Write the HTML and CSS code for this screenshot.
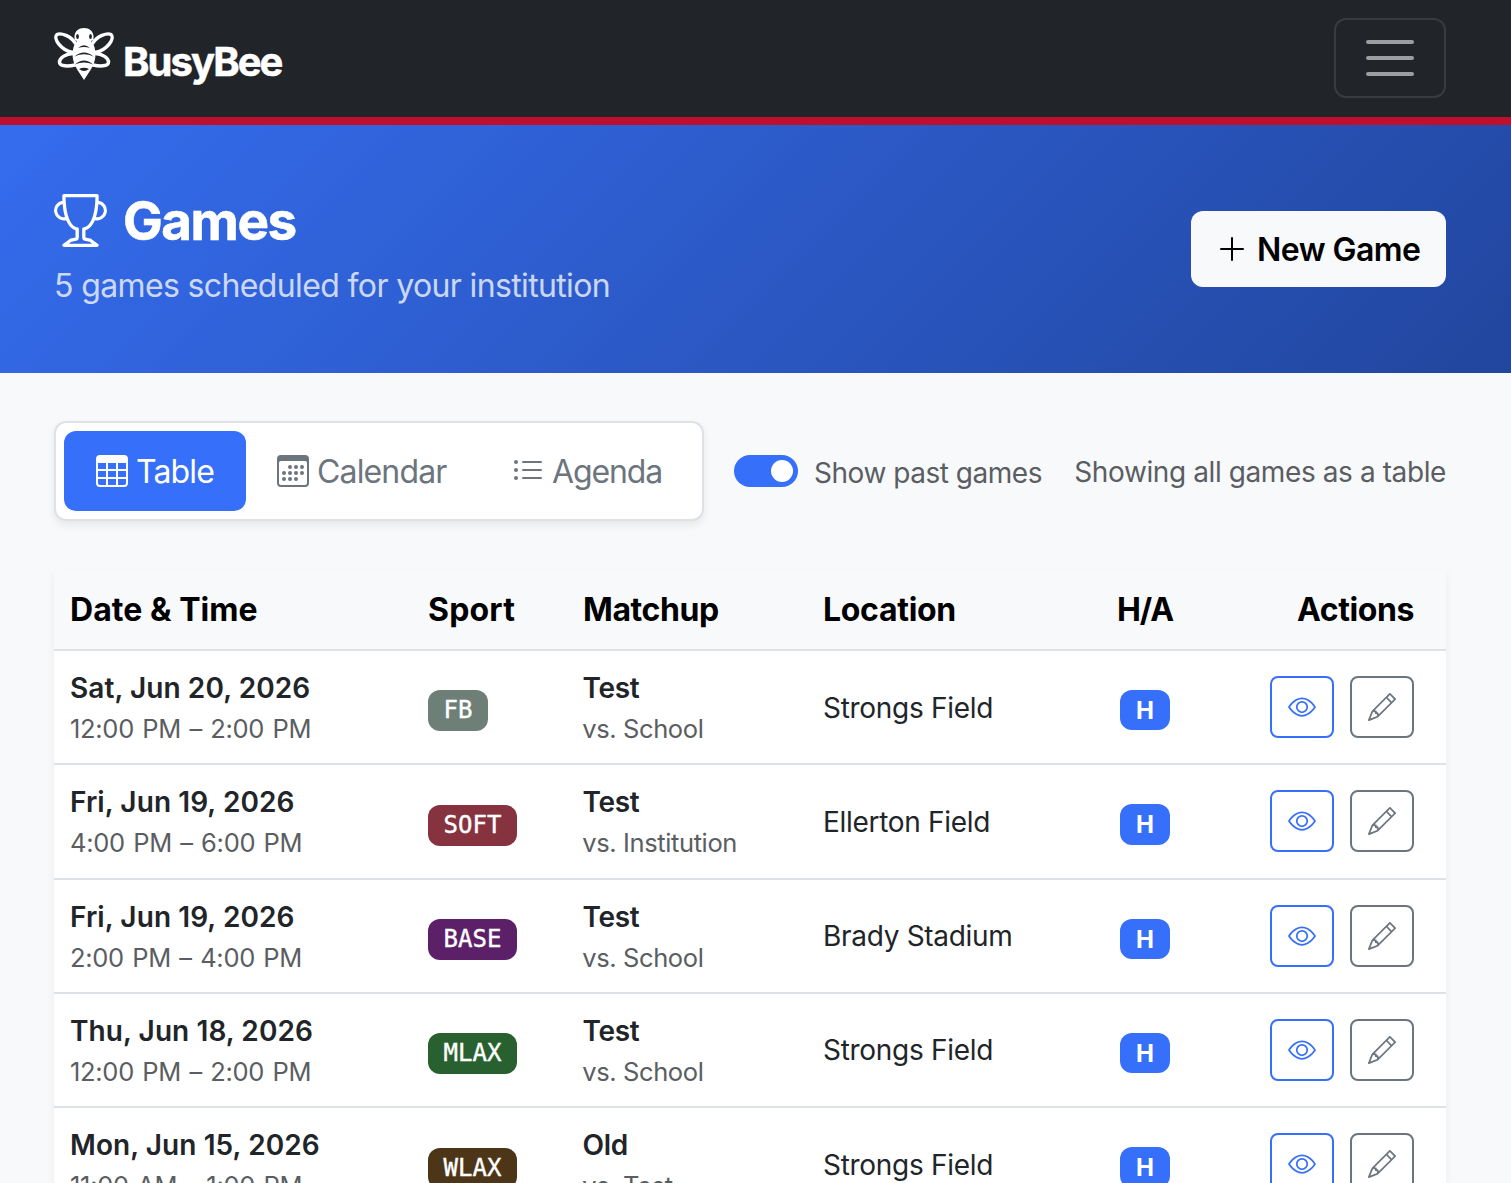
FILE: index.html
```html
<!DOCTYPE html>
<html lang="en">
<head>
<meta charset="utf-8">
<title>Games - BusyBee</title>
<link rel="stylesheet" href="styles.css">
</head>
<body>
<svg class="sprite" aria-hidden="true">
  <symbol id="bee" viewBox="0 0 60 52">
    <g class="bee-wings">
      <path d="M21 15C17 8 7 4.500 3 6.500-1 10 6 22 19 24.500M39 15C43 8 53 4.500 57 6.500 61 10 54 22 41 24.500"/>
      <path d="M19 25.500C12 25.500 5 30 5.500 34.500 6 38.500 14 38.500 21 37M41 25.500C48 25.500 55 30 54.500 34.500 54 38.500 46 38.500 39 37"/>
    </g>
    <path d="M30 0C24.500 0 21 3 20.500 8L20.500 12 23 13C20 16 18.500 21 18.500 26.500 18.500 32 20.500 37 23.500 42L30 52 36.500 42C39.500 37 41.500 32 41.500 26.500 41.500 21 40 16 37 13L39.500 12 39.500 8C39 3 35.500 0 30 0z"/>
    <g class="bee-cut">
      <ellipse cx="23.500" cy="8.500" rx="1.400" ry="2.600"/><ellipse cx="36.500" cy="8.500" rx="1.400" ry="2.600"/>
      <path d="M24 20Q30 14.500 36 20 30 18 24 20zM20.500 28.500Q30 20.500 39.500 28.500 30 24 20.500 28.500zM21 36.500Q30 28.500 39 36.500 30 32.500 21 36.500zM25 41Q30 38.500 35 41 30 45 25 41z"/>
    </g>
  </symbol>
  <symbol id="trophy" viewBox="0 0 16 16"><path d="M2.5.5A.5.5 0 0 1 3 0h10a.5.5 0 0 1 .5.5q0 .807-.034 1.536a3 3 0 1 1-1.133 5.89c-.79 1.865-1.878 2.777-2.833 3.011v2.173l1.425.356c.194.048.377.135.537.255L13.3 15.1a.5.5 0 0 1-.3.9H3a.5.5 0 0 1-.3-.9l1.838-1.379c.16-.12.343-.207.537-.255L6.500 13.110v-2.173c-.955-.234-2.043-1.146-2.833-3.012a3 3 0 1 1-1.132-5.890A33 33 0 0 1 2.500.5m.099 2.540a2 2 0 0 0 .72 3.935c-.333-1.050-.588-2.346-.72-3.935m10.083 3.935a2 2 0 0 0 .72-3.935c-.133 1.590-.388 2.885-.72 3.935M3.504 1q.01.775.056 1.469c.13 2.028.457 3.546.87 4.667C5.294 9.480 6.484 10 7 10a.5.5 0 0 1 .5.5v2.610a1 1 0 0 1-.757.970l-1.426.356a.5.5 0 0 0-.179.085L4.500 15h7l-.638-.479a.5.5 0 0 0-.18-.085l-1.425-.356a1 1 0 0 1-.757-.970V10.500A.5.5 0 0 1 9 10c.516 0 1.706-.520 2.570-2.864.413-1.120.740-2.640.870-4.667q.045-.694.056-1.469z"/></symbol>
  <symbol id="plus" viewBox="0 0 16 16"><path d="M8 2a.5.5 0 0 1 .5.5v5h5a.5.5 0 0 1 0 1h-5v5a.5.5 0 0 1-1 0v-5h-5a.5.5 0 0 1 0-1h5v-5A.5.5 0 0 1 8 2"/></symbol>
  <symbol id="grid" viewBox="0 0 16 16"><path d="M0 2a2 2 0 0 1 2-2h12a2 2 0 0 1 2 2v12a2 2 0 0 1-2 2H2a2 2 0 0 1-2-2zm15 2h-4v3h4zm0 4h-4v3h4zm0 4h-4v3h3a1 1 0 0 0 1-1zm-5 3v-3H6v3zm-5 0v-3H1v2a1 1 0 0 0 1 1zm-4-4h4V8H1zm0-4h4V4H1zm5-3v3h4V4zm4 4H6v3h4z"/></symbol>
  <symbol id="calendar" viewBox="0 0 16 16"><path d="M14 0H2a2 2 0 0 0-2 2v12a2 2 0 0 0 2 2h12a2 2 0 0 0 2-2V2a2 2 0 0 0-2-2M1 3.857C1 3.384 1.448 3 2 3h12c.552 0 1 .384 1 .857v10.286c0 .473-.448.857-1 .857H2c-.552 0-1-.384-1-.857z"/><path d="M6.500 7a1 1 0 1 0 0-2 1 1 0 0 0 0 2m3 0a1 1 0 1 0 0-2 1 1 0 0 0 0 2m3 0a1 1 0 1 0 0-2 1 1 0 0 0 0 2m-9 3a1 1 0 1 0 0-2 1 1 0 0 0 0 2m3 0a1 1 0 1 0 0-2 1 1 0 0 0 0 2m3 0a1 1 0 1 0 0-2 1 1 0 0 0 0 2m3 0a1 1 0 1 0 0-2 1 1 0 0 0 0 2m-9 3a1 1 0 1 0 0-2 1 1 0 0 0 0 2m3 0a1 1 0 1 0 0-2 1 1 0 0 0 0 2m3 0a1 1 0 1 0 0-2 1 1 0 0 0 0 2"/></symbol>
  <symbol id="list" viewBox="0 0 16 16"><path d="M5 11.500a.5.5 0 0 1 .5-.5h9a.5.5 0 0 1 0 1h-9a.5.5 0 0 1-.5-.5m0-4a.5.5 0 0 1 .5-.5h9a.5.5 0 0 1 0 1h-9a.5.5 0 0 1-.5-.5m0-4a.5.5 0 0 1 .5-.5h9a.5.5 0 0 1 0 1h-9a.5.5 0 0 1-.5-.5m-3 1a1 1 0 1 0 0-2 1 1 0 0 0 0 2m0 4a1 1 0 1 0 0-2 1 1 0 0 0 0 2m0 4a1 1 0 1 0 0-2 1 1 0 0 0 0 2"/></symbol>
  <symbol id="eye" viewBox="0 0 16 16"><path d="M16 8s-3-5.500-8-5.500S0 8 0 8s3 5.500 8 5.500S16 8 16 8M1.173 8a13 13 0 0 1 1.660-2.043C4.120 4.668 5.880 3.500 8 3.500s3.879 1.168 5.168 2.457A13 13 0 0 1 14.828 8q-.086.130-.195.288c-.335.480-.830 1.120-1.465 1.755C11.879 11.332 10.119 12.500 8 12.500s-3.879-1.168-5.168-2.457A13 13 0 0 1 1.172 8z"/><path d="M8 5.500a2.500 2.500 0 1 0 0 5 2.500 2.500 0 0 0 0-5M4.500 8a3.500 3.500 0 1 1 7 0 3.500 3.500 0 0 1-7 0"/></symbol>
  <symbol id="pencil" viewBox="0 0 16 16"><path d="M12.146.146a.5.5 0 0 1 .708 0l3 3a.5.5 0 0 1 0 .708l-10 10a.5.5 0 0 1-.168.110l-5 2a.5.5 0 0 1-.650-.650l2-5a.5.5 0 0 1 .110-.168zM11.207 2.500 13.500 4.793 14.793 3.500 12.500 1.207zm1.586 3L10.500 3.207 4 9.707V10h.5a.5.5 0 0 1 .5.5v.5h.5a.5.5 0 0 1 .5.5v.5h.293zm-9.761 5.175-.106.106-1.528 3.821 3.821-1.528.106-.106A.5.5 0 0 1 5 12.500V12h-.5a.5.5 0 0 1-.5-.5V11h-.5a.5.5 0 0 1-.468-.325"/></symbol>
</svg>

<header class="navbar">
  <a class="brand"><svg class="brand-icon"><use href="#bee"/></svg><span class="brand-name">BusyBee</span></a>
  <button class="menu-toggle" aria-label="Menu"><span class="bar"></span><span class="bar"></span><span class="bar"></span></button>
</header>

<section class="hero">
  <div class="hero-text">
    <h1 class="hero-title"><svg class="hero-icon"><use href="#trophy"/></svg><span class="title-label">Games</span></h1>
    <p class="hero-sub">5 games scheduled for your institution</p>
  </div>
  <button class="new-game"><svg class="icon"><use href="#plus"/></svg><span class="new-label">New Game</span></button>
</section>

<main class="content">
  <div class="toolbar">
    <div class="views">
      <button class="view view-table active"><svg class="icon"><use href="#grid"/></svg><span class="view-label">Table</span></button>
      <button class="view view-calendar"><svg class="icon"><use href="#calendar"/></svg><span class="view-label">Calendar</span></button>
      <button class="view view-agenda"><svg class="icon"><use href="#list"/></svg><span class="view-label">Agenda</span></button>
    </div>
    <div class="past"><span class="switch"><span class="knob"></span></span><span class="past-label">Show past games</span></div>
    <span class="summary">Showing all games as a table</span>
  </div>

  <table class="games">
    <colgroup><col class="c-date"><col class="c-sport"><col class="c-match"><col class="c-loc"><col class="c-ha"><col class="c-act"></colgroup>
    <thead><tr><th class="h-date">Date &amp; Time</th><th class="h-sport">Sport</th><th class="h-match">Matchup</th><th class="h-loc">Location</th><th class="h-ha">H/A</th><th class="h-act">Actions</th></tr></thead>
    <tbody>
      <tr>
        <td><div class="date">Sat, Jun 20, 2026</div><div class="time">12:00 PM – 2:00 PM</div></td>
        <td><span class="badge fb">FB</span></td>
        <td><div class="team">Test</div><div class="opponent">vs. School</div></td>
        <td><div class="place">Strongs Field</div></td>
        <td class="ha"><span class="badge home">H</span></td>
        <td><div class="actions"><button class="act view-act" aria-label="View"><svg class="act-icon"><use href="#eye"/></svg></button><button class="act edit-act" aria-label="Edit"><svg class="act-icon"><use href="#pencil"/></svg></button></div></td>
      </tr>
      <tr>
        <td><div class="date">Fri, Jun 19, 2026</div><div class="time">4:00 PM – 6:00 PM</div></td>
        <td><span class="badge soft">SOFT</span></td>
        <td><div class="team">Test</div><div class="opponent">vs. Institution</div></td>
        <td><div class="place">Ellerton Field</div></td>
        <td class="ha"><span class="badge home">H</span></td>
        <td><div class="actions"><button class="act view-act" aria-label="View"><svg class="act-icon"><use href="#eye"/></svg></button><button class="act edit-act" aria-label="Edit"><svg class="act-icon"><use href="#pencil"/></svg></button></div></td>
      </tr>
      <tr>
        <td><div class="date">Fri, Jun 19, 2026</div><div class="time">2:00 PM – 4:00 PM</div></td>
        <td><span class="badge base">BASE</span></td>
        <td><div class="team">Test</div><div class="opponent">vs. School</div></td>
        <td><div class="place">Brady Stadium</div></td>
        <td class="ha"><span class="badge home">H</span></td>
        <td><div class="actions"><button class="act view-act" aria-label="View"><svg class="act-icon"><use href="#eye"/></svg></button><button class="act edit-act" aria-label="Edit"><svg class="act-icon"><use href="#pencil"/></svg></button></div></td>
      </tr>
      <tr>
        <td><div class="date">Thu, Jun 18, 2026</div><div class="time">12:00 PM – 2:00 PM</div></td>
        <td><span class="badge mlax">MLAX</span></td>
        <td><div class="team">Test</div><div class="opponent">vs. School</div></td>
        <td><div class="place">Strongs Field</div></td>
        <td class="ha"><span class="badge home">H</span></td>
        <td><div class="actions"><button class="act view-act" aria-label="View"><svg class="act-icon"><use href="#eye"/></svg></button><button class="act edit-act" aria-label="Edit"><svg class="act-icon"><use href="#pencil"/></svg></button></div></td>
      </tr>
      <tr>
        <td><div class="date">Mon, Jun 15, 2026</div><div class="time">11:00 AM – 1:00 PM</div></td>
        <td><span class="badge wlax">WLAX</span></td>
        <td><div class="team">Old</div><div class="opponent">vs. Test</div></td>
        <td><div class="place">Strongs Field</div></td>
        <td class="ha"><span class="badge home">H</span></td>
        <td><div class="actions"><button class="act view-act" aria-label="View"><svg class="act-icon"><use href="#eye"/></svg></button><button class="act edit-act" aria-label="Edit"><svg class="act-icon"><use href="#pencil"/></svg></button></div></td>
      </tr>
    </tbody>
  </table>
</main>
</body>
</html>
```
FILE: styles.css
```css
* { box-sizing: border-box; }
html { overflow: hidden; }
body {
  margin: 0;
  height: 1183px;
  overflow: hidden;
  background: #f8f9fb;
  color: #212529;
  font: 400 32px/48px Inter, "Liberation Sans", sans-serif;
}
button { font: inherit; color: inherit; margin: 0; padding: 0; border: 0; background: none; }
svg { display: block; fill: currentColor; flex: none; }
.sprite { display: none; }
.icon { width: 32px; height: 32px; }

.navbar {
  height: 125px;
  padding: 18px 65px 0 54px;
  display: flex;
  justify-content: space-between;
  align-items: flex-start;
  background: #212529;
  border-bottom: 8px solid #be0f2e;
}
.brand { display: flex; gap: 9px; color: #fff; padding-top: 10px; }
.brand-icon { width: 60px; height: 52px; }
.bee-wings { fill: none; stroke: #fff; stroke-width: 3.4; stroke-linecap: round; }
.bee-cut { fill: #212529; }
.brand-name { font-size: 40px; font-weight: 700; letter-spacing: -1.95px; line-height: 68px; white-space: nowrap; -webkit-text-stroke: .5px #fff; }
.menu-toggle {
  width: 112px;
  height: 80px;
  display: flex;
  flex-direction: column;
  justify-content: center;
  align-items: center;
  gap: 12px;
  border: 2px solid #383b3f;
  border-radius: 12px;
}
.bar { width: 48px; height: 4px; border-radius: 2px; background: #9b9d9e; }

.hero {
  height: 248px;
  padding: 0 65px 0 54px;
  display: flex;
  justify-content: space-between;
  align-items: center;
  background: linear-gradient(135deg, #356cee 0%, #21469e 100%);
  color: #fff;
}
.hero-text { padding-top: 1px; }
.hero-title { margin: 0; display: flex; align-items: center; gap: 16px; height: 64px; font-size: 53px; font-weight: 700; line-height: 64px; letter-spacing: -1.5px; -webkit-text-stroke: .6px #fff; }
.hero-icon { width: 53px; height: 53px; margin-bottom: 2px; }
.hero-sub { margin: 9px 0 0; opacity: .75; letter-spacing: -.63px; white-space: nowrap; }
.new-game {
  width: 255px;
  height: 76px;
  padding-left: 25px;
  display: flex;
  align-items: center;
  gap: 9px;
  border-radius: 12px;
  background: #f8f9fb;
  color: #000;
  font-weight: 600;
  white-space: nowrap;
}
.new-label { letter-spacing: -.55px; padding-top: 2px; }

.content { padding: 48px 65px 0 54px; }
.toolbar { height: 100px; display: flex; align-items: center; white-space: nowrap; }
.views {
  flex: none;
  width: 650px;
  height: 100px;
  padding: 8px;
  display: flex;
  align-items: center;
  border: 2px solid #dee2e6;
  border-radius: 12px;
  background: #fff;
  box-shadow: 0 4px 8px rgba(0, 0, 0, .075);
}
.view { height: 80px; display: flex; align-items: center; gap: 8px; border-radius: 12px; color: #6c757d; }
.view-label { letter-spacing: -.85px; padding-top: 2px; }
.view-table { width: 182px; padding-left: 32px; }
.view-calendar { width: 233px; padding-left: 31px; }
.view-agenda { padding-left: 33px; }
.view-agenda .view-label { letter-spacing: -1.1px; }
.view.active { background: #366ff9; color: #fff; }
.past { display: flex; align-items: center; margin-left: 30px; }
.switch { width: 64px; height: 32px; padding: 5px; display: flex; justify-content: flex-end; border-radius: 16px; background: #366ff9; }
.knob { width: 22px; height: 22px; border-radius: 50%; background: #fff; }
.past-label { margin-left: 16px; font-size: 28px; color: #5a5e62; padding-top: 4px; letter-spacing: -.47px; }
.summary { margin-left: auto; font-size: 28px; color: #5a5e62; letter-spacing: -.4px; padding-top: 1px; }

.games {
  width: 1392px;
  margin-top: 48px;
  table-layout: fixed;
  border-collapse: separate;
  border-spacing: 0;
  background: #fff;
  box-shadow: 0 4px 8px rgba(0, 0, 0, .06);
}
.c-date { width: 358px; }
.c-sport { width: 155px; }
.c-match { width: 240px; }
.c-loc { width: 294px; }
.c-ha { width: 88px; }
.c-act { width: 257px; }
th { height: 82px; padding: 2px 16px 0; text-align: left; font-weight: 700; letter-spacing: -.4px; color: #000; background: #f8f9fb; border-bottom: 2px solid #dee2e6; white-space: nowrap; }
.h-date { letter-spacing: .05px; }
.h-sport { letter-spacing: .2px; }
.h-loc { letter-spacing: -.3px; }
.h-ha { text-align: center; padding: 2px 0 0; letter-spacing: -1.2px; }
.h-act { text-align: right; padding-right: 32px; }
td { height: 114.33px; padding: 0 16px; vertical-align: middle; border-bottom: 2px solid #dee2e6; white-space: nowrap; }
.date, .team { font-size: 28px; font-weight: 600; line-height: 42px; }
.date { letter-spacing: .08px; padding-top: .7px; }
.team { letter-spacing: -.3px; margin-left: -.5px; padding-top: .7px; }
.time, .opponent { font-size: 25.5px; line-height: 39px; color: #5a5e62; }
.opponent { letter-spacing: -.38px; margin-left: -.8px; }
.time { letter-spacing: -.3px; word-spacing: 1.5px; }
.place { font-size: 28px; line-height: 42px; letter-spacing: -.3px; padding-top: .7px; }
.badge {
  display: inline-block;
  height: 41px;
  margin-top: 3px;
  padding: 0 15.6px;
  border-radius: 12px;
  color: #fff;
  font: 400 24px/41px "DejaVu Sans Mono", monospace;
  -webkit-text-stroke: .4px #fff;
  vertical-align: middle;
}
.fb { background: #6e7f78; }
.soft { background: #87323f; }
.base { background: #5c2068; }
.mlax { background: #28612f; }
.wlax { background: #4c3617; }
.ha { padding: 0; text-align: center; }
.home { background: #366ff9; height: 40.5px; margin-top: 1.5px; font: 700 24px/41px Inter, sans-serif; -webkit-text-stroke: 0; }
td:last-child { padding-right: 32px; }
.actions { display: flex; justify-content: flex-end; gap: 16px; }
.act { width: 64px; height: 62px; display: flex; align-items: center; justify-content: center; border: 2px solid; border-radius: 8px; }
.act-icon { width: 28px; height: 28px; }
.view-act { color: #366ff9; }
.edit-act { color: #6c757d; }
```
